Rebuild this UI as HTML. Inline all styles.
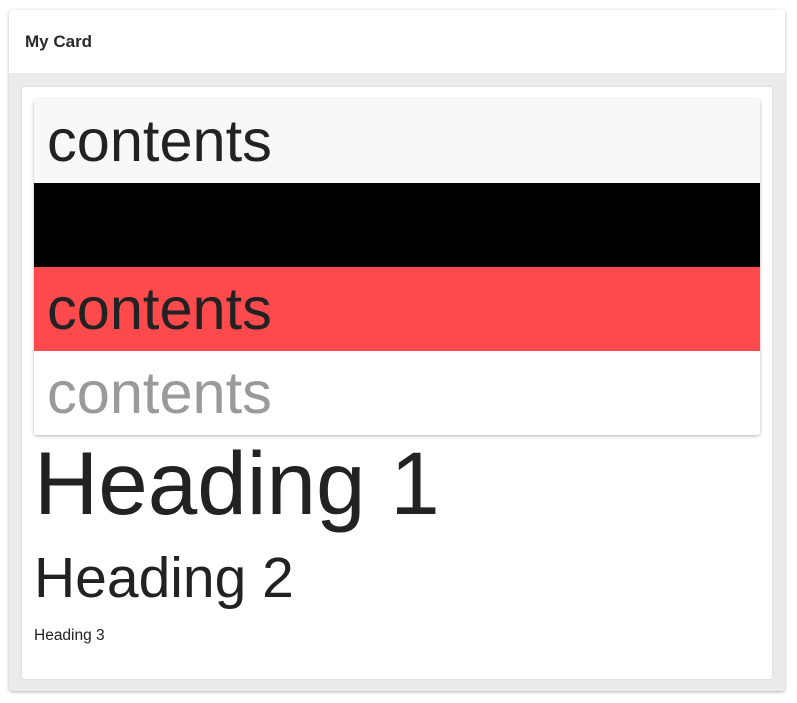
<!DOCTYPE html>
<html><head><style>
*{margin:0;padding:0;box-sizing:border-box}
body{width:797px;height:703px;background:#fff;font-family:"Liberation Sans",sans-serif;color:#222;position:relative;overflow:hidden}
.outer{position:absolute;left:9px;top:10px;width:776px;height:681px;background:#ebebeb;border-radius:3px;box-shadow:0 1px 3px rgba(0,0,0,.3)}
.hdr{height:63px;background:#fff;border-radius:3px 3px 0 0;padding-left:16px;font-size:17px;font-weight:bold;line-height:64px;color:#2a2a2a}
.inner{position:absolute;left:13px;top:77px;width:750px;height:592px;background:#fff;border-radius:2px;box-shadow:0 0 1px rgba(0,0,0,.3)}
.list{position:absolute;left:12px;top:12px;width:726px;height:336px;border-radius:3px;box-shadow:0 1px 3px rgba(0,0,0,.3);overflow:hidden}
.row{height:84px;font-size:59.5px;line-height:84px;padding-left:13px}
.h1{position:absolute;left:12px;top:341px;font-size:89px;line-height:110px;color:#222}
.h2{position:absolute;left:12px;top:456px;font-size:57px;line-height:70px;color:#222}
.h3{position:absolute;left:12px;top:540px;font-size:15.5px;line-height:18px;color:#222}
</style></head><body>
<div class="outer">
<div class="hdr">My Card</div>
<div class="inner">
<div class="list">
<div class="row" style="background:#f8f8f8;color:#222">contents</div>
<div class="row" style="background:#000;color:#000"></div>
<div class="row" style="background:#ff4a4d;color:#222">contents</div>
<div class="row" style="background:#fff;color:#9a9a9a">contents</div>
</div>
<div class="h1">Heading 1</div>
<div class="h2">Heading 2</div>
<div class="h3">Heading 3</div>
</div>
</div>
</body></html>
